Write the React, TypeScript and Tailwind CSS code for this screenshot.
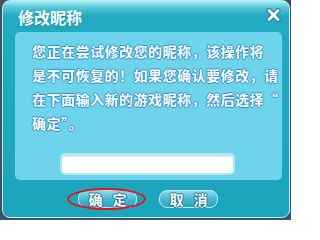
import React from 'react'

const cjk = "font-['Noto_Sans_CJK_SC','Noto_Sans',sans-serif]"
const outline = '[text-shadow:1px_0_0_#3190c8,-1px_0_0_#3190c8,0_1px_0_#3190c8,0_-1px_0_#3190c8]'
const btnOutline = '[text-shadow:1px_0_0_#1f6f92,-1px_0_0_#1f6f92,0_1px_0_#1f6f92,0_-1px_0_#1f6f92]'

function DlgButton({ a, b }: { a: string; b: string }) {
  return (
    <button className={`w-[59px] h-[18px] rounded-[8px] border border-[#bdeff7] bg-[linear-gradient(180deg,#8fdcea_0%,#4ab8d2_50%,#2ba4c6_100%)] flex items-center justify-center gap-[10px] text-white text-[14px] font-bold leading-none ${cjk} ${btnOutline}`}>
      <span>{a}</span>
      <span>{b}</span>
    </button>
  )
}

export default function App() {
  return (
    <div className="w-[291px] h-[220px] bg-[#3d5360] overflow-hidden">
      <div className="relative ml-[2px] w-[288px] h-[218px] rounded-[8px] border border-[#b6eef4] bg-[linear-gradient(180deg,#b0eef3_0px,#5cc7d8_6px,#22aac2_15px,#1ba5bd_100%)]">
        {/* title */}
        <div className="h-[31px] flex items-center justify-between pl-[15px] pr-[8px]">
          <span className={`text-white text-[16px] font-bold leading-none pt-[1px] ${cjk} [text-shadow:0_1px_1px_#1b8aa3]`}>修改昵称</span>
          <svg width="15" height="14" viewBox="0 0 15 14" className="mt-[-4px]">
            <path d="M3 2.5 L12 11.5 M12 2.5 L3 11.5" stroke="#1b7f96" strokeWidth="5" strokeLinecap="round" />
            <path d="M3 2.5 L12 11.5 M12 2.5 L3 11.5" stroke="#ffffff" strokeWidth="3" strokeLinecap="round" />
          </svg>
        </div>

        {/* panel */}
        <div className="ml-[12px] w-[267px] h-[148px] rounded-[5px] bg-[#6dd4ec] pt-[7px] pl-[17px]">
          <p className={`text-white text-[14px] font-bold leading-[24px] tracking-[0.5px] ${cjk} ${outline}`}>
            您正在尝试修改您的昵称，该操作将<br />
            是不可恢复的！如果您确认要修改，请<br />
            在下面输入新的游戏昵称，然后选择“<br />
            确定”。
          </p>
          <div className="mt-[18px] ml-[28px] w-[175px] h-[22px] rounded-[5px] border-2 border-[#a9e9f5] bg-white shadow-[inset_0_2px_2px_#d8dde0]" />
        </div>

        {/* buttons */}
        <div className="mt-[10px] flex justify-center gap-[22px] pl-[4px]">
          <div className="relative">
            <DlgButton a="确" b="定" />
            <div className="absolute left-[-11px] top-[-2px] w-[79px] h-[22px] rounded-[50%] border-2 border-[#e3141c]" />
          </div>
          <DlgButton a="取" b="消" />
        </div>
      </div>
    </div>
  )
}
